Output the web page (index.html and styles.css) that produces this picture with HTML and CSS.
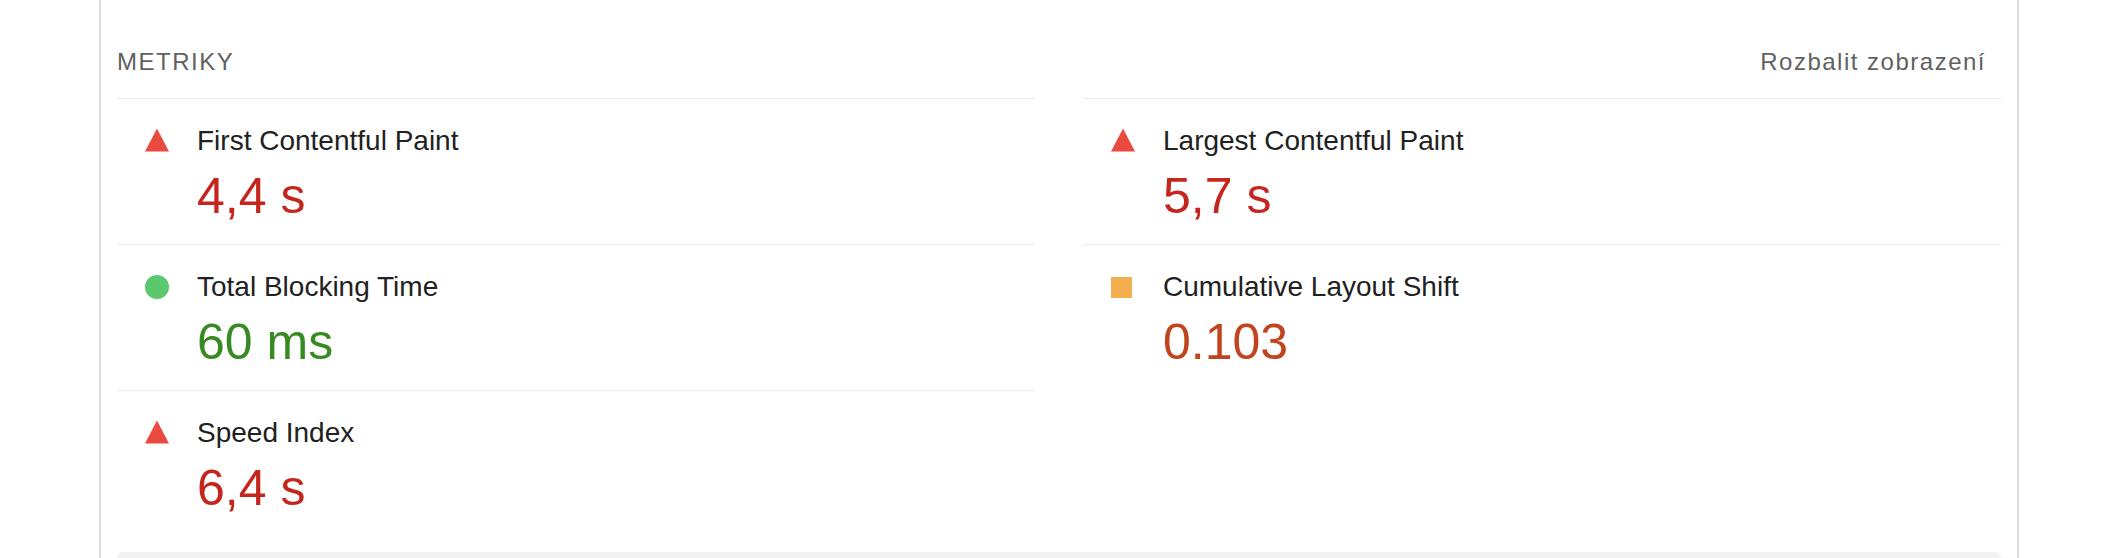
FILE: index.html
```html
<!DOCTYPE html>
<html lang="cs">

<head>
    <meta charset="UTF-8">
    <meta name="viewport" content="width=device-width, initial-scale=1.0">
    <title>Metriky</title>
    <link rel="stylesheet" href="styles.css">
</head>

<body>

    <section class="report">
        <div class="metrics-header">
            <span class="group-title">Metriky</span>
            <span class="toggle">Rozbalit zobrazení</span>
        </div>

        <div class="metrics">
            <div class="metric fail">
                <div class="metric-head">
                    <span class="icon"></span>
                    <span class="metric-title">First Contentful Paint</span>
                </div>
                <div class="metric-value">4,4 s</div>
            </div>

            <div class="metric fail">
                <div class="metric-head">
                    <span class="icon"></span>
                    <span class="metric-title">Largest Contentful Paint</span>
                </div>
                <div class="metric-value">5,7 s</div>
            </div>

            <div class="metric pass">
                <div class="metric-head">
                    <span class="icon"></span>
                    <span class="metric-title">Total Blocking Time</span>
                </div>
                <div class="metric-value">60 ms</div>
            </div>

            <div class="metric average">
                <div class="metric-head">
                    <span class="icon"></span>
                    <span class="metric-title">Cumulative Layout Shift</span>
                </div>
                <div class="metric-value">0.103</div>
            </div>

            <div class="metric fail">
                <div class="metric-head">
                    <span class="icon"></span>
                    <span class="metric-title">Speed Index</span>
                </div>
                <div class="metric-value">6,4 s</div>
            </div>
        </div>

        <div class="strip"></div>
    </section>

</body>

</html>
```

FILE: styles.css
```css
body {
    font-family: 'Liberation Sans', Arial, sans-serif;
    margin: 0;
    padding: 0;
    background-color: #fff;
    color: #212121;
}

.report {
    width: 1884px;
    margin-left: 99px;
    padding: 46px 16px 0;
    border-left: 2px solid #dadce0;
    border-right: 2px solid #dadce0;
}

.metrics-header {
    display: flex;
    justify-content: space-between;
    align-items: center;
    font-size: 24px;
    line-height: 32px;
    letter-spacing: 1.5px;
    color: #616161;
    margin-bottom: 20px;
}

.group-title {
    text-transform: uppercase;
}

.toggle {
    padding-right: 15px;
}

.metrics {
    display: grid;
    grid-template-columns: 1fr 1fr;
    column-gap: 48px;
}

.metric {
    border-top: 1px solid #ebebeb;
    padding: 22px 0 13px 28px;
}

.metric-head {
    display: flex;
    align-items: center;
    gap: 28px;
    height: 40px;
}

.metric-title {
    font-size: 28px;
    line-height: 40px;
    color: #212121;
}

.icon {
    width: 24px;
    height: 24px;
    flex-shrink: 0;
}

.fail .icon {
    height: 23px;
    margin-top: -2px;
    background-color: #eb4a41;
    clip-path: polygon(50% 0, 100% 100%, 0 100%);
}

.pass .icon {
    background-color: #5cc86e;
    border-radius: 50%;
}

.average .icon {
    width: 21px;
    height: 21px;
    margin-right: 3px;
    background-color: #f3af4f;
}

.metric-value {
    padding-left: 52px;
    font-size: 50px;
    line-height: 70px;
}

.fail .metric-value {
    color: #c4261d;
}

.pass .metric-value {
    color: #388a22;
}

.average .metric-value {
    color: #c0441e;
}

/* top of the next block, cut off by the frame */
.strip {
    margin-top: 16px;
    height: 6px;
    background-color: #f3f3f3;
    border-radius: 8px 8px 0 0;
}
```
